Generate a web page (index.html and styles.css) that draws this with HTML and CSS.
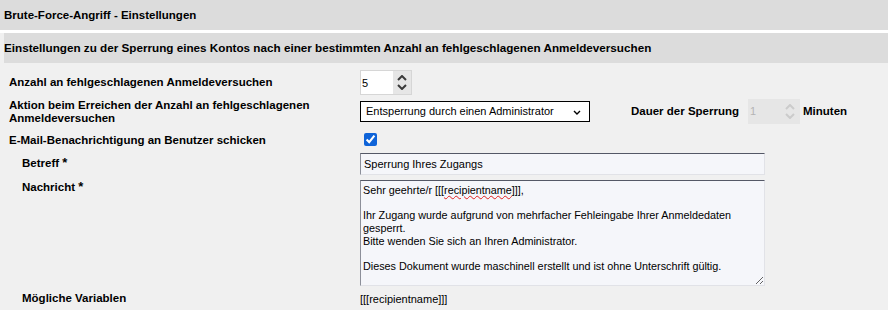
FILE: index.html
```html
<!DOCTYPE html>
<html lang="de">
<head>
  <meta charset="UTF-8" />
  <title>Brute-Force-Angriff - Einstellungen</title>
  <link rel="stylesheet" href="styles.css">
</head>
<body>
  <header class="titlebar">Brute-Force-Angriff - Einstellungen</header>

  <div class="panel">
    <div class="section-head">Einstellungen zu der Sperrung eines Kontos nach einer bestimmten Anzahl an fehlgeschlagenen Anmeldeversuchen</div>

    <div class="row row-count">
      <label class="lbl">Anzahl an fehlgeschlagenen Anmeldeversuchen</label>
      <div class="spin">
        <input type="text" value="5" />
        <div class="spin-btns">
          <svg width="10" height="6" viewBox="0 0 10 6"><path d="M1 5 L5 1 L9 5" /></svg>
          <svg width="10" height="6" viewBox="0 0 10 6"><path d="M1 1 L5 5 L9 1" /></svg>
        </div>
      </div>
    </div>

    <div class="row row-action">
      <label class="lbl">Aktion beim Erreichen der Anzahl an fehlgeschlagenen Anmeldeversuchen</label>
      <div class="select">
        <select>
          <option>Entsperrung durch einen Administrator</option>
        </select>
        <svg class="select-arrow" width="8" height="5" viewBox="0 0 8 5"><path d="M1 1 L4 4 L7 1" /></svg>
      </div>
      <div class="duration">
        <span class="dur-lbl">Dauer der Sperrung</span>
        <div class="spin disabled">
          <input type="text" value="1" disabled />
          <div class="spin-btns">
            <svg width="10" height="6" viewBox="0 0 10 6"><path d="M1 5 L5 1 L9 5" /></svg>
            <svg width="10" height="6" viewBox="0 0 10 6"><path d="M1 1 L5 5 L9 1" /></svg>
          </div>
        </div>
        <span class="dur-lbl">Minuten</span>
      </div>
    </div>

    <div class="row row-mail">
      <label class="lbl">E-Mail-Benachrichtigung an Benutzer schicken</label>
      <input type="checkbox" class="check" checked />
    </div>

    <div class="row sub row-subject">
      <label class="lbl">Betreff <span class="req">*</span></label>
      <input type="text" class="field" value="Sperrung Ihres Zugangs" />
    </div>

    <div class="row sub row-message">
      <label class="lbl">Nachricht <span class="req">*</span></label>
      <div class="field area">Sehr geehrte/r [[[<span class="spell">recipientname</span>]]],

Ihr Zugang wurde aufgrund von mehrfacher Fehleingabe Ihrer Anmeldedaten gesperrt.
Bitte wenden Sie sich an Ihren Administrator.

Dieses Dokument wurde maschinell erstellt und ist ohne Unterschrift gültig.</div>
    </div>

    <div class="row sub row-vars">
      <label class="lbl">Mögliche Variablen</label>
      <span class="vars">[[[recipientname]]]</span>
    </div>
  </div>
</body>
</html>
```

FILE: styles.css
```css
body {
  margin: 0;
  background: #fff;
  font-family: "Liberation Sans", Arial, sans-serif;
  color: #000;
}
.titlebar {
  height: 30px;
  line-height: 30px;
  padding-left: 4px;
  background: #dcdcdc;
  font-size: 11.5px;
  font-weight: bold;
}
.panel {
  margin-top: 3px;
  min-height: 277px;
  background: #f0f0f0;
  padding-left: 4px;
}
.section-head {
  height: 30px;
  line-height: 30px;
  background: #dcdcdc;
  font-size: 11.7px;
  font-weight: bold;
}
.row {
  display: flex;
  align-items: center;
  padding-left: 5px;
}
.lbl {
  box-sizing: border-box;
  width: 351px;
  flex: none;
  padding-right: 40px;
  font-size: 11.5px;
  font-weight: bold;
  line-height: 13px;
}
.sub .lbl {
  padding-left: 13px;
}
.req {
  font-size: 13px;
}
.row-count {
  margin-top: 7px;
  height: 25px;
}
.row-action {
  margin-top: 3px;
  height: 26px;
}
.row-action .lbl {
  padding-top: 1px;
}
.row-mail {
  margin-top: 8px;
  height: 14px;
}
.row-mail .lbl {
  padding-top: 3px;
}
.row-subject {
  margin-top: 7px;
  height: 22px;
}
.row-subject .lbl {
  padding-bottom: 2px;
}
.row-message {
  margin-top: 5px;
  align-items: flex-start;
}
.row-message .lbl {
  line-height: 14px;
}
.row-vars {
  margin-top: 6px;
  height: 13px;
}

/* number field with spinner */
.spin {
  box-sizing: border-box;
  display: flex;
  width: 52px;
  height: 25px;
  border: 1px solid #d6d6d6;
  background: #fff;
}
.spin input {
  box-sizing: border-box;
  width: 32px;
  height: 100%;
  border: none;
  outline: none;
  padding: 0 0 0 1px;
  background: transparent;
  font-family: inherit;
  font-size: 11px;
  color: #000;
}
.spin-btns {
  flex: 1;
  display: flex;
  flex-direction: column;
  align-items: center;
  justify-content: center;
  gap: 3px;
  background: #e6e6e6;
}
.spin-btns path {
  fill: none;
  stroke: #3a3a3a;
  stroke-width: 2;
}
.spin.disabled {
  border-color: #e6e6e6;
  background: #e6e6e6;
}
.spin.disabled input {
  color: #b4b4b4;
}
.spin.disabled .spin-btns path {
  stroke: #cbcbcb;
}

/* select */
.select {
  position: relative;
  width: 230px;
  height: 21px;
}
.select select {
  appearance: none;
  box-sizing: border-box;
  width: 100%;
  height: 100%;
  border: 1px solid #000;
  border-radius: 0;
  background: #fff;
  padding: 0 0 2px 5px;
  font-family: inherit;
  font-size: 11px;
  color: #000;
}
.select-arrow {
  position: absolute;
  right: 9px;
  top: 9px;
}
.select-arrow path {
  fill: none;
  stroke: #000;
  stroke-width: 1.4;
}
.duration {
  display: flex;
  align-items: center;
  margin-left: 41px;
}
.dur-lbl {
  font-size: 11.5px;
  font-weight: bold;
}
.duration .spin {
  margin: 0 3px 0 9px;
}

/* checkbox */
.check {
  width: 13px;
  height: 13px;
  margin: 0 0 0 4px;
  accent-color: #0e63d8;
}

/* text fields */
.field {
  box-sizing: border-box;
  width: 405px;
  border: 1px solid #e1e2e7;
  border-top-color: #545866;
  border-left-color: #8c8f99;
  background: #f5f6fa;
  font-family: inherit;
  font-size: 11px;
  color: #000;
  outline: none;
}
input.field {
  height: 22px;
  padding: 0 3px;
}
.area {
  height: 106px;
  padding: 3px 2px;
  font-size: 10.8px;
  line-height: 12.7px;
  white-space: pre-wrap;
  overflow: auto;
  resize: vertical;
}
.spell {
  text-decoration: underline wavy #e02020;
  text-decoration-thickness: 1px;
}
.vars {
  font-size: 11px;
}
```
